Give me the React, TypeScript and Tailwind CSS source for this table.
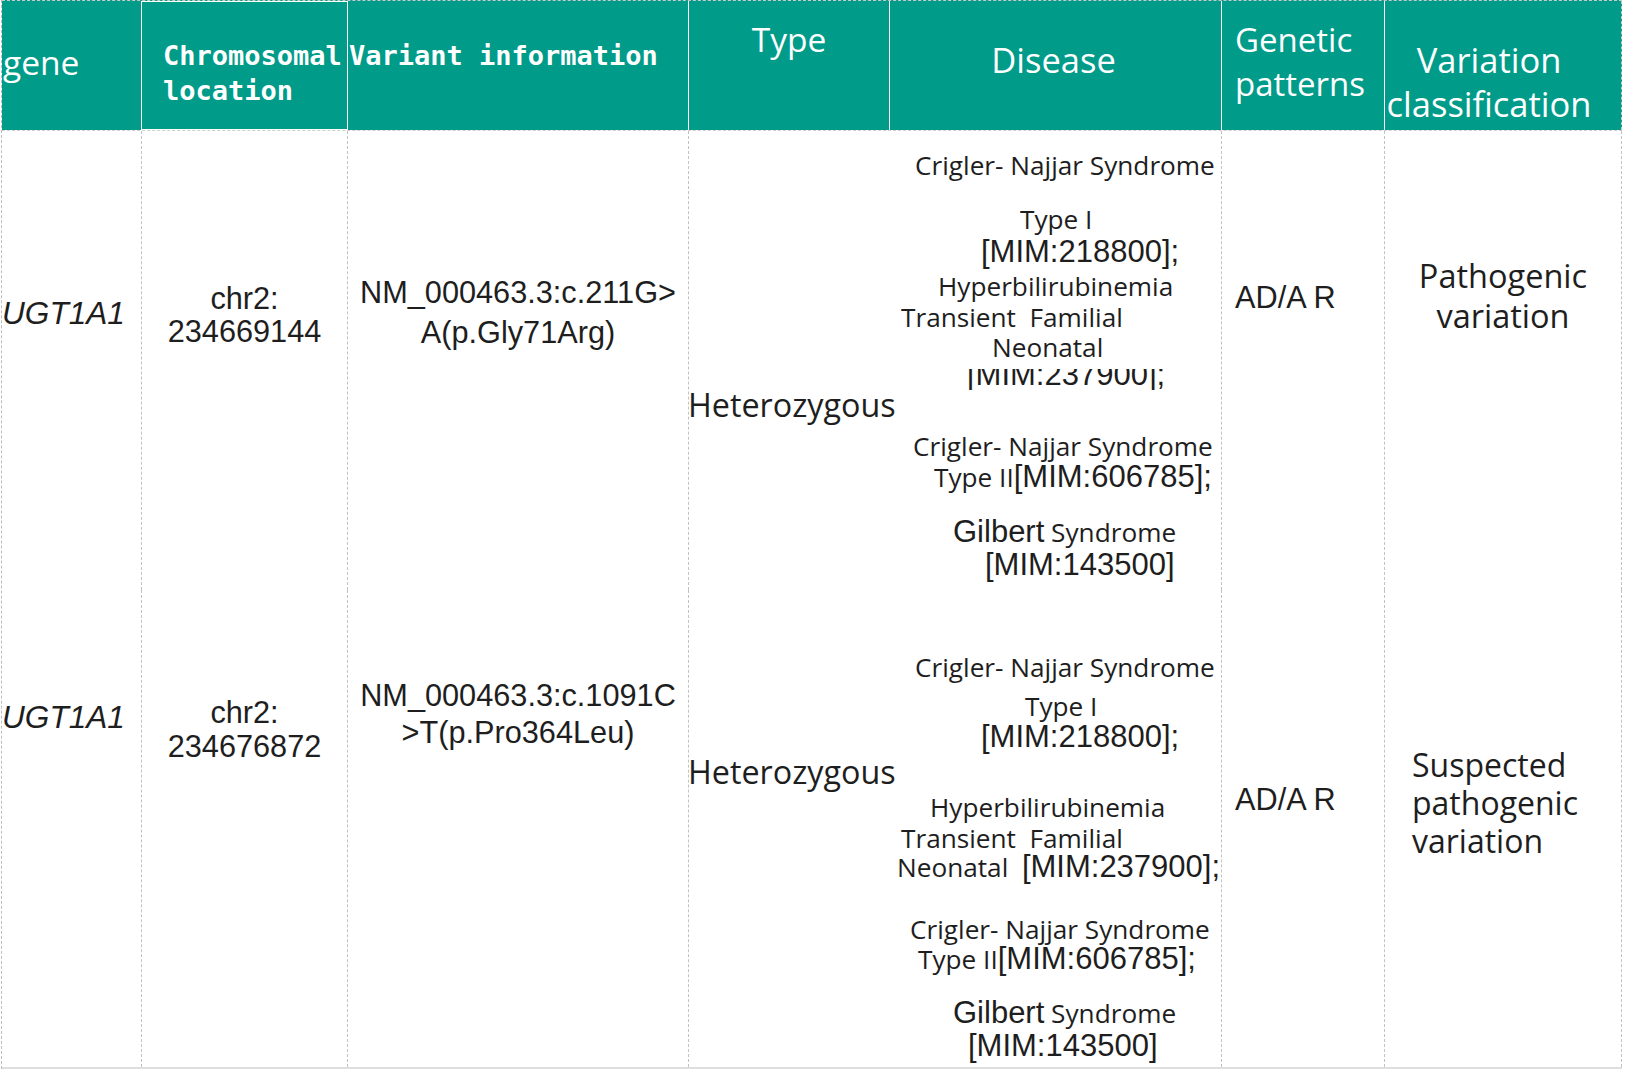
import React from "react";

const AR = "font-['Liberation_Sans',Arial,sans-serif]";
const OS = "font-['Open_Sans',sans-serif]";
const MONO = "font-['DejaVu_Sans_Mono',monospace]";
const COLS = "grid grid-cols-[140px_206px_341px_201px_332px_163px_237px]";

type Part = { t: string; a?: boolean };
type Line = { parts: Part[]; cls: string; clip?: boolean };

const row1Disease: Line[] = [
  { parts: [{ t: "Crigler- Najjar Syndrome" }], cls: "h-[54px] pl-[25px]" },
  { parts: [{ t: "Type I" }], cls: "h-[33px] pl-[130px]" },
  { parts: [{ t: "[MIM:218800];", a: true }], cls: "h-[34px] pl-[91px]" },
  { parts: [{ t: "Hyperbilirubinemia" }], cls: "h-[31px] pl-[48px]" },
  { parts: [{ t: "Transient  Familial" }], cls: "h-[30px] pl-[11px]" },
  { parts: [{ t: "Neonatal" }], cls: "h-[28px] pl-[102px]" },
  { parts: [{ t: "[MIM:237900];", a: true }], cls: "h-[62px] pl-[77px]", clip: true },
  { parts: [{ t: "Crigler- Najjar Syndrome" }], cls: "h-[31px] pl-[23px]" },
  { parts: [{ t: "Type II" }, { t: "[MIM:606785];", a: true }], cls: "h-[55px] pl-[44px]" },
  { parts: [{ t: "Gilbert", a: true }, { t: " Syndrome" }], cls: "h-[33px] pl-[63px]" },
  { parts: [{ t: "[MIM:143500]", a: true }], cls: "h-[30px] pl-[95px]" },
];

const row2Disease: Line[] = [
  { parts: [{ t: "Crigler- Najjar Syndrome" }], cls: "h-[39px] pl-[25px]" },
  { parts: [{ t: "Type I" }], cls: "h-[31px] pl-[135px]" },
  { parts: [{ t: "[MIM:218800];", a: true }], cls: "h-[70px] pl-[91px]" },
  { parts: [{ t: "Hyperbilirubinemia" }], cls: "h-[31px] pl-[40px]" },
  { parts: [{ t: "Transient  Familial" }], cls: "h-[29px] pl-[11px]" },
  { parts: [{ t: "Neonatal  " }, { t: "[MIM:237900];", a: true }], cls: "h-[62px] pl-[7px]" },
  { parts: [{ t: "Crigler- Najjar Syndrome" }], cls: "h-[30px] pl-[20px]" },
  { parts: [{ t: "Type II" }, { t: "[MIM:606785];", a: true }], cls: "h-[54px] pl-[28px]" },
  { parts: [{ t: "Gilbert", a: true }, { t: " Syndrome" }], cls: "h-[33px] pl-[63px]" },
  { parts: [{ t: "[MIM:143500]", a: true }], cls: "h-[30px] pl-[78px]" },
];

function Parts({ parts }: { parts: Part[] }) {
  return (
    <>
      {parts.map((p, i) =>
        p.a ? (
          <span key={i} className={`${AR} text-[31px]`}>
            {p.t}
          </span>
        ) : (
          <span key={i}>{p.t}</span>
        )
      )}
    </>
  );
}

function Disease({ lines, pt }: { lines: Line[]; pt: string }) {
  return (
    <div className={`${pt} ${OS} text-[26.2px] text-[#1e1e1e] whitespace-pre`}>
      {lines.map((l, i) =>
        l.clip ? (
          <div key={i} className={l.cls}>
            <div className="h-[21px] mt-[9px] overflow-hidden">
              <div className="-mt-[9px] leading-[30px]">
                <Parts parts={l.parts} />
              </div>
            </div>
          </div>
        ) : (
          <div key={i} className={`${l.cls} leading-[30px]`}>
            <Parts parts={l.parts} />
          </div>
        )
      )}
    </div>
  );
}

const cellR = "border-r border-dashed border-[#c2c2c2]";

export default function App() {
  return (
    <div className="w-[1626px] h-[1072px] bg-white overflow-hidden">
      <div className="w-[1621px] ml-[1px] border-l border-dashed border-[#bdbdbd]">
        {/* header */}
        <div
          className={`${COLS} h-[130px] bg-[#009b89] border-t border-dashed border-[#c9c9c9] text-white`}
        >
          <div className={`border-r border-white pl-[1px] pt-[41px] leading-[40px] text-[33.5px] ${OS}`}>
            gene
          </div>
          <div
            className={`border-r border-t border-b border-white pl-[21px] pt-[36px] leading-[35px] text-[27px] font-bold ${MONO} whitespace-nowrap`}
          >
            <div>Chromosomal</div>
            <div>location</div>
          </div>
          <div
            className={`border-r border-white pl-[1px] pt-[37px] leading-[35px] text-[27px] font-bold ${MONO} whitespace-nowrap`}
          >
            Variant information
          </div>
          <div className={`border-r border-white text-center pt-[18px] leading-[40px] text-[33.5px] ${OS}`}>
            Type
          </div>
          <div className={`border-r border-white text-center pr-[4px] pt-[39px] leading-[40px] text-[34.5px] ${OS}`}>
            Disease
          </div>
          <div className={`border-r border-white pl-[13px] pt-[17px] leading-[44px] text-[33px] ${OS} whitespace-nowrap`}>
            <div>Genetic</div>
            <div>patterns</div>
          </div>
          <div
            className={`border-r border-dashed border-[#c9c9c9] text-center pr-[28px] pt-[37px] leading-[44px] text-[34.5px] ${OS} whitespace-nowrap`}
          >
            <div>Variation</div>
            <div>classification</div>
          </div>
        </div>

        {/* body */}
        <div
          className={`${COLS} grid-rows-[459px_477px] border-t border-dashed border-[#cfcfcf] text-[#1e1e1e]`}
        >
          {/* row 1 */}
          <div className={`${cellR} pl-[0px] pt-[165px] leading-[34px] text-[31.6px] italic ${AR}`}>UGT1A1</div>
          <div className={`${cellR} text-center pt-[151px] leading-[33px] text-[30.7px] ${AR}`}>
            <div>chr2:</div>
            <div>234669144</div>
          </div>
          <div className={`${cellR} text-center pt-[142px] leading-[40px] text-[30.7px] ${AR} whitespace-nowrap`}>
            <div>NM_000463.3:c.211G&gt;</div>
            <div>A(p.Gly71Arg)</div>
          </div>
          <div className={`relative z-10 -ml-[1px] pt-[253px] leading-[40px] text-[32.3px] ${OS} whitespace-nowrap`}>
            Heterozygous
          </div>
          <div className={cellR}>
            <Disease lines={row1Disease} pt="pt-[19px]" />
          </div>
          <div className={`${cellR} pl-[13px] pt-[150px] leading-[34px] text-[30.7px] ${AR} whitespace-pre`}>
            AD/A R
          </div>
          <div className={`${cellR} text-center pt-[125px] leading-[40px] text-[32.5px] ${OS}`}>
            <div>Pathogenic</div>
            <div>variation</div>
          </div>

          {/* row 2 */}
          <div className={`${cellR} pl-[0px] pt-[110px] leading-[34px] text-[31.6px] italic ${AR}`}>UGT1A1</div>
          <div className={`${cellR} text-center pt-[106px] leading-[34px] text-[30.7px] ${AR}`}>
            <div>chr2:</div>
            <div>234676872</div>
          </div>
          <div className={`${cellR} text-center pt-[87px] leading-[37px] text-[30.7px] ${AR} whitespace-nowrap`}>
            <div>NM_000463.3:c.1091C</div>
            <div>&gt;T(p.Pro364Leu)</div>
          </div>
          <div className={`relative z-10 -ml-[1px] pt-[161px] leading-[40px] text-[32.3px] ${OS} whitespace-nowrap`}>
            Heterozygous
          </div>
          <div className={cellR}>
            <Disease lines={row2Disease} pt="pt-[62px]" />
          </div>
          <div className={`${cellR} pl-[13px] pt-[193px] leading-[34px] text-[30.7px] ${AR} whitespace-pre`}>
            AD/A R
          </div>
          <div className={`${cellR} pl-[27px] pt-[156px] leading-[38px] text-[32px] ${OS} whitespace-nowrap`}>
            <div>Suspected</div>
            <div>pathogenic</div>
            <div>variation</div>
          </div>
        </div>
        <div className="h-[2px] bg-[#dedede]" />
      </div>
    </div>
  );
}
